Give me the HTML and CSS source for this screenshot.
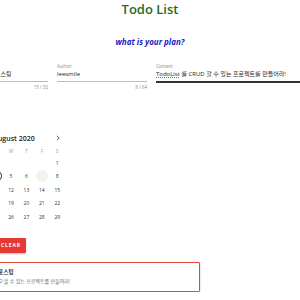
FILE: index.html
```html
<!DOCTYPE html>
<html>
<head>
    <title>Todo List</title>
    <link rel="stylesheet" href="styles.css">
</head>
<body>
    <div class="app">
        <h1 class="title">Todo List</h1>
        <h2 class="subtitle">what is your plan?</h2>

        <div class="fields">
            <div class="field">
                <label class="field-label">Title</label>
                <div class="field-input">TodoList 작성 포스팅</div>
                <div class="field-help">15 / 32</div>
            </div>
            <div class="field">
                <label class="field-label">Author</label>
                <div class="field-input">leesmile</div>
                <div class="field-help">8 / 64</div>
            </div>
            <div class="field focused">
                <label class="field-label">Content</label>
                <div class="field-input"><span class="typo">TodoList</span> 를 CRUD 할 수 있는 프로젝트를 만들어라!</div>
            </div>
        </div>

        <div class="calendar">
            <div class="cal-head">
                <span class="cal-arrow">
                    <svg width="6" height="6" viewBox="0 0 6 6"><path d="M4 0.8 L1.8 3 L4 5.2" fill="none" stroke="#333" stroke-width="0.8"/></svg>
                </span>
                <span class="cal-month">August 2020</span>
                <span class="cal-arrow">
                    <svg width="6" height="6" viewBox="0 0 6 6"><path d="M2 0.8 L4.2 3 L2 5.2" fill="none" stroke="#333" stroke-width="0.8"/></svg>
                </span>
            </div>
            <div class="cal-grid">
                <span class="wd">S</span><span class="wd">M</span><span class="wd">T</span><span class="wd">W</span><span class="wd">T</span><span class="wd">F</span><span class="wd">S</span>

                <span class="day"></span><span class="day"></span><span class="day"></span><span class="day"></span><span class="day"></span><span class="day"></span><span class="day"><i>1</i></span>
                <span class="day"><i>2</i></span><span class="day"><i>3</i></span><span class="day today"><i>4</i></span><span class="day"><i>5</i></span><span class="day"><i>6</i></span><span class="day hover"><i>7</i></span><span class="day"><i>8</i></span>
                <span class="day"><i>9</i></span><span class="day"><i>10</i></span><span class="day"><i>11</i></span><span class="day"><i>12</i></span><span class="day"><i>13</i></span><span class="day"><i>14</i></span><span class="day"><i>15</i></span>
                <span class="day"><i>16</i></span><span class="day"><i>17</i></span><span class="day"><i>18</i></span><span class="day"><i>19</i></span><span class="day"><i>20</i></span><span class="day"><i>21</i></span><span class="day"><i>22</i></span>
                <span class="day"><i>23</i></span><span class="day"><i>24</i></span><span class="day"><i>25</i></span><span class="day"><i>26</i></span><span class="day"><i>27</i></span><span class="day"><i>28</i></span><span class="day"><i>29</i></span>
            </div>
        </div>

        <div class="buttons">
            <button class="btn">ADD</button>
            <button class="btn">CLEAR</button>
        </div>

        <div class="card">
            <div class="card-title">TodoList 작성 포스팅</div>
            <div class="card-text">TodoList 를 CRUD 할 수 있는 프로젝트를 만들어라!</div>
        </div>
    </div>
</body>
</html>
```

FILE: styles.css
```css
body {
    margin: 0;
    font-family: "Open Sans", "Noto Sans CJK KR", sans-serif;
    color: #222;
    display: flex;
    flex-direction: column;
    align-items: center;
    overflow: hidden;
}

/* wider than the window, centered, so both sides get cut */
.app {
    width: 386px;
    flex-shrink: 0;
}

.title {
    margin: 0;
    padding-top: 1px;
    font-size: 13px;
    line-height: 16px;
    font-weight: 600;
    color: #1f6b1f;
    text-align: center;
}

.subtitle {
    margin: 20px 0 0 0;
    font-size: 8px;
    line-height: 10px;
    font-weight: 700;
    font-style: italic;
    color: #1a1ac8;
    text-align: center;
}

.fields {
    display: grid;
    grid-template-columns: 91px 90px 1fr;
    column-gap: 9px;
    margin-top: 16px;
}

.field-label {
    display: block;
    font-size: 4.5px;
    line-height: 6px;
    color: #888;
}

.field-input {
    font-size: 6px;
    line-height: 9px;
    padding: 1px 0 2px 0;
    border-bottom: 1px solid #bbb;
    white-space: nowrap;
}

.focused .field-input {
    border-bottom: 2px solid #333;
}

.typo {
    text-decoration: underline dotted #e53935;
    text-decoration-thickness: 0.6px;
}

.field-help {
    font-size: 4.5px;
    line-height: 6px;
    margin-top: 2px;
    color: #888;
    text-align: right;
}

.calendar {
    width: 108px;
    margin-top: 42px;
}

.cal-head {
    display: flex;
    align-items: center;
    justify-content: space-between;
    height: 12px;
    padding: 0 1px 0 3px;
}

.cal-arrow {
    display: flex;
    width: 12px;
    justify-content: center;
}

.cal-month {
    font-size: 7px;
    font-weight: 600;
    padding-left: 4px;
}

.cal-grid {
    display: grid;
    grid-template-columns: repeat(7, 1fr);
    margin-top: 2px;
}

.wd {
    text-align: center;
    font-size: 4.5px;
    line-height: 10px;
    color: #999;
}

.day {
    height: 13.5px;
    display: flex;
    align-items: center;
    justify-content: center;
}

.day i {
    font-style: normal;
    font-size: 5px;
    color: #333;
    width: 12px;
    height: 12px;
    border-radius: 50%;
    display: flex;
    align-items: center;
    justify-content: center;
    box-sizing: border-box;
}

.today i {
    border: 0.8px solid #333;
}

.hover i {
    background-color: #f2f2f2;
    color: #f2f2f2;
}

.buttons {
    display: flex;
    gap: 10px;
    margin-top: 14px;
}

.btn {
    font-family: "Open Sans", sans-serif;
    font-size: 5px;
    font-weight: 700;
    letter-spacing: 0.9px;
    color: #fff;
    background-color: #e53935;
    border: none;
    border-radius: 1px;
    height: 15px;
    min-width: 29px;
    padding: 0 5px;
    box-shadow: 0 1px 2px rgba(0, 0, 0, 0.25);
}

.card {
    width: 243px;
    box-sizing: border-box;
    margin-top: 9px;
    padding: 5px 4px 6px 4px;
    border: 1.5px solid #e8473b;
    border-radius: 1px;
    box-shadow: 0 1px 2px rgba(0, 0, 0, 0.25);
}

.card-title {
    font-size: 5.5px;
    line-height: 9px;
    font-weight: 700;
}

.card-text {
    font-size: 5px;
    line-height: 8px;
    color: #666;
}
```
